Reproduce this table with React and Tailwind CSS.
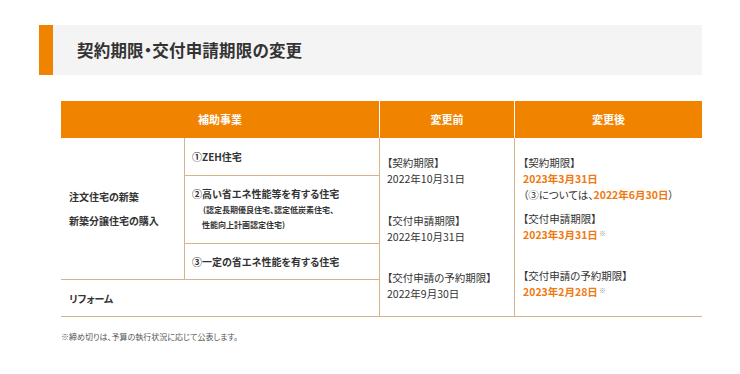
export default function App() {
  const font = "font-['Noto_Sans_CJK_JP','Noto_Sans',sans-serif]";
  const bd = "border-[#d6b48f]";
  const or = "text-[#f07a12] font-bold";
  const sup = <span className="text-[7px] text-[#999] align-top relative top-[-2px] ml-[1px] font-normal">※</span>;
  return (
    <div className={`w-[740px] h-[374px] bg-white overflow-hidden ${font} text-[#333] [font-feature-settings:'palt']`}>
      <div className="mt-[25px] ml-[39px] w-[663px] h-[50px] flex">
        <div className="w-[14px] bg-[#f08300]" />
        <div className="flex-1 bg-[#f4f4f4] flex items-center pl-[24px]">
          <span className="text-[16.5px] font-bold text-[#333] tracking-[0.2px]">契約期限・交付申請期限の変更</span>
        </div>
      </div>

      <div className="mt-[26px] ml-[61px] w-[641px] grid grid-cols-[124px_195px_135px_187px] grid-rows-[37px_38px_68px_36px_37px]">
        <div className="col-span-2 bg-[#f08300] border-r border-white flex items-center justify-center text-white text-[11px] font-bold">補助事業</div>
        <div className="bg-[#f08300] border-r border-white flex items-center justify-center text-white text-[11px] font-bold">変更前</div>
        <div className="bg-[#f08300] flex items-center justify-center text-white text-[11px] font-bold">変更後</div>

        <div className={`col-start-1 row-start-2 row-span-3 border-r border-b ${bd} flex flex-col justify-center pl-[8px] gap-[10px] text-[10px] font-bold leading-[14px]`}>
          <div>注文住宅の新築</div>
          <div>新築分譲住宅の購入</div>
        </div>
        <div className={`col-start-2 row-start-2 border-r border-b ${bd} flex items-center pl-[7px] text-[10px] font-bold`}>①ZEH住宅</div>
        <div className={`col-start-2 row-start-3 border-r border-b ${bd} flex flex-col justify-center pl-[7px] pb-[2px]`}>
          <div className="text-[10px] font-bold leading-[16px]">②高い省エネ性能等を有する住宅</div>
          <div className="text-[8px] font-bold leading-[16px] pl-[11px]">(認定長期優良住宅、認定低炭素住宅、</div>
          <div className="text-[8px] font-bold leading-[14px] pl-[10px]">性能向上計画認定住宅)</div>
        </div>
        <div className={`col-start-2 row-start-4 border-r border-b ${bd} flex items-center pl-[7px] text-[10px] font-bold`}>③一定の省エネ性能を有する住宅</div>
        <div className={`col-start-1 col-span-2 row-start-5 border-r border-b ${bd} flex items-center pl-[8px] text-[10px] font-bold`}>リフォーム</div>

        <div className={`col-start-3 row-start-2 row-span-4 border-r border-b ${bd} pl-[7px] pt-[17px] text-[10.5px] leading-[16px]`}>
          <div>【契約期限】</div>
          <div>2022年10月31日</div>
          <div className="mt-[26px]">【交付申請期限】</div>
          <div>2022年10月31日</div>
          <div className="mt-[25px]">【交付申請の予約期限】</div>
          <div>2022年9月30日</div>
        </div>
        <div className={`col-start-4 row-start-2 row-span-4 border-b ${bd} pl-[8px] pt-[17px] text-[10.5px] leading-[16px]`}>
          <div>【契約期限】</div>
          <div className={or}>2023年3月31日</div>
          <div className="leading-[15px]">（③については、<span className={or}>2022年6月30日</span>）</div>
          <div className="mt-[9px]">【交付申請期限】</div>
          <div><span className={or}>2023年3月31日</span>{sup}</div>
          <div className="mt-[25px]">【交付申請の予約期限】</div>
          <div><span className={or}>2023年2月28日</span>{sup}</div>
        </div>
      </div>

      <div className="mt-[14px] ml-[61px] text-[8px] leading-[12px] text-[#555]">※締め切りは、予算の執行状況に応じて公表します。</div>
    </div>
  );
}
